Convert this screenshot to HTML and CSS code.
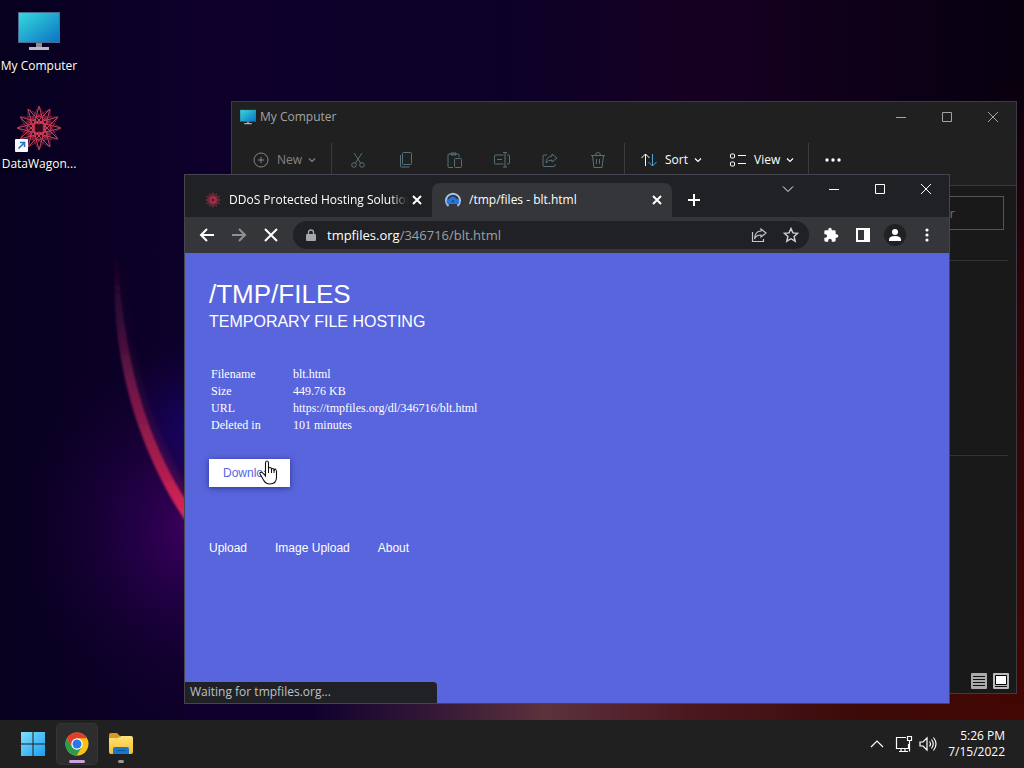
FILE: index.html
```html
<!DOCTYPE html>
<html lang="en">
<head>
<meta charset="utf-8">
<title>Desktop</title>
<link rel="stylesheet" href="styles.css">
</head>
<body>
<svg class="defs" aria-hidden="true">
  <defs>
    <linearGradient id="screen" x1="0" y1="0" x2="1" y2="1"><stop offset="0" stop-color="#35d9dc"/><stop offset="1" stop-color="#0b73c4"/></linearGradient>
    <linearGradient id="win" x1="0" y1="0" x2="1" y2="1"><stop offset="0" stop-color="#7fe0fc"/><stop offset="1" stop-color="#1c9df2"/></linearGradient>
    <linearGradient id="folder" x1="0" y1="0" x2="0" y2="1"><stop offset="0" stop-color="#ffe27a"/><stop offset="1" stop-color="#f5bd2c"/></linearGradient>
    <symbol id="monitor" viewBox="0 0 42 38"><rect x="0" y="0" width="42" height="31" fill="#4d6b8c"/><rect x="1" y="1" width="40" height="29" fill="url(#screen)"/><path d="M18 31h6v4h-6z" fill="#8b8d96"/><path d="M11 35h20v3H11z" fill="#b9bbc2"/></symbol>
    <symbol id="star" viewBox="-24 -24 48 48"><g fill="none" stroke="#a03048" stroke-width="1"><circle r="15" fill="#5a1024" stroke="none" opacity=".5"/><path stroke="#c2485f" d="M0-22 11 19-19-11 22 0-19 11 11-19 0 22-11-19 19 11-22 0 19-11-11 19Z"/><path d="M0-22 19 11-19 11ZM11-19 11 19-22 0ZM19-11 0 22-19-11ZM22 0-11 19-11-19Z" opacity=".7"/><g stroke="#d32f4d"><circle cy="-8" r="4"/><circle cy="8" r="4"/><circle cx="-8" r="4"/><circle cx="8" r="4"/><circle cx="6" cy="6" r="3"/><circle cx="-6" cy="6" r="3"/><circle cx="6" cy="-6" r="3"/><circle cx="-6" cy="-6" r="3"/></g></g></symbol>
    <symbol id="chev" viewBox="0 0 8 8"><path d="M1 2.500l3 3 3-3" fill="none" stroke="currentColor" stroke-width="1.200"/></symbol>
    <symbol id="x" viewBox="0 0 12 12"><path d="M1 1l10 10M11 1L1 11" fill="none" stroke="currentColor"/></symbol>
    <symbol id="min" viewBox="0 0 12 12"><path d="M1 6.500h10" stroke="currentColor"/></symbol>
    <symbol id="max" viewBox="0 0 12 12"><path d="M1.500 1.500h9v9h-9z" fill="none" stroke="currentColor"/></symbol>
  </defs>
</svg>
<div class="desktop">
  <svg class="wallpaper" viewBox="0 0 1024 720" preserveAspectRatio="none" aria-hidden="true">
    <defs>
      <radialGradient id="violet" gradientUnits="userSpaceOnUse" cx="200" cy="530" r="190"><stop offset="0" stop-color="#400062"/><stop offset=".4" stop-color="#26004a" stop-opacity=".75"/><stop offset="1" stop-color="#150030" stop-opacity="0"/></radialGradient>
      <radialGradient id="blue" gradientUnits="userSpaceOnUse" cx="200" cy="430" r="100"><stop offset="0" stop-color="#16067a" stop-opacity=".8"/><stop offset="1" stop-color="#10003a" stop-opacity="0"/></radialGradient>
      <linearGradient id="base" x1="0" x2="1" y1="0" y2="0"><stop offset="0" stop-color="#07001f"/><stop offset=".2" stop-color="#0e002b"/><stop offset=".5" stop-color="#0d0028"/><stop offset=".68" stop-color="#160022"/><stop offset=".85" stop-color="#0e0018"/><stop offset="1" stop-color="#07000f"/></linearGradient>
      <linearGradient id="floor" x1="0" x2="1" y1="0" y2="0"><stop offset=".15" stop-color="#10002d"/><stop offset=".3" stop-color="#351936"/><stop offset=".43" stop-color="#5c323c"/><stop offset=".6" stop-color="#4c1820"/><stop offset=".8" stop-color="#3c0a08"/><stop offset="1" stop-color="#430703"/></linearGradient>
      <linearGradient id="side" x1="0" x2="0" y1="0" y2="1"><stop offset=".1" stop-color="#2c0008" stop-opacity="0"/><stop offset=".4" stop-color="#2c0308"/><stop offset="1" stop-color="#430703"/></linearGradient>
      <linearGradient id="arc" gradientUnits="userSpaceOnUse" x1="0" x2="0" y1="250" y2="515"><stop offset="0" stop-color="#5a1440" stop-opacity="0"/><stop offset=".25" stop-color="#4a1040" stop-opacity=".6"/><stop offset=".5" stop-color="#6b1748"/><stop offset=".8" stop-color="#a81c4e"/><stop offset="1" stop-color="#da2657"/></linearGradient>
      <filter id="soft" x="-50%" y="-10%" width="200%" height="120%"><feGaussianBlur stdDeviation="1"/></filter>
      <filter id="glow" x="-50%" y="-10%" width="200%" height="120%"><feGaussianBlur stdDeviation="4"/></filter>
    </defs>
    <path fill="url(#base)" d="M0 0h1024v720H0z"/>
    <path fill="url(#violet)" d="M0 300h420v420H0z"/>
    <path fill="url(#blue)" d="M116 250C110 350 136 446 190 528h120V250z"/>
    <path fill="url(#floor)" d="M184 690h840v30H184z"/>
    <path fill="url(#side)" d="M1000 0h24v720h-24z"/>
    <path d="M122 260C119 350 146 440 195 508" fill="none" stroke="url(#arc)" stroke-width="6" opacity=".4" filter="url(#glow)"/>
    <path d="M115 250C109 350 134 446 190 528L190 506C145 440 121 350 118 250Z" fill="url(#arc)" filter="url(#soft)"/>
  </svg>

  <nav class="shortcuts" aria-label="Desktop icons">
    <a href="#computer" class="shortcut"><svg class="pc"><use href="#monitor"/></svg><span>My Computer</span></a>
    <a href="#datawagon" class="shortcut compact"><svg class="wagon" viewBox="0 0 48 48"><use href="#star" width="48" height="48"/><rect x="0" y="35" width="13" height="13" rx="1" fill="#f7f8fc"/><path d="M3.500 44.500l5.500-5.500M5 38.500h4.500v4.500" fill="none" stroke="#2672c8" stroke-width="1.600"/></svg><span>DataWagon...</span></a>
  </nav>

  <section class="explorer" aria-label="My Computer">
    <header class="ex-title"><svg class="ex-icon"><use href="#monitor"/></svg><span>My Computer</span>
      <div class="caption"><button aria-label="Minimize"><svg><use href="#min"/></svg></button><button aria-label="Maximize"><svg><use href="#max"/></svg></button><button aria-label="Close"><svg><use href="#x"/></svg></button></div>
    </header>
    <div class="commands">
      <button class="cmd new"><svg class="i16" viewBox="0 0 16 16"><circle cx="8" cy="8" r="7"/><path d="M8 5v6M5 8h6"/></svg>New<svg class="chev"><use href="#chev"/></svg></button>
      <div class="tools">
        <button aria-label="Cut"><svg class="i16" viewBox="0 0 16 16"><path d="M4 1l6.500 10M12 1L5.500 11"/><circle cx="4" cy="13" r="2.300"/><circle cx="12" cy="13" r="2.300"/></svg></button>
        <button aria-label="Copy"><svg class="i16" viewBox="0 0 16 16"><rect x="4.500" y=".5" width="9" height="12" rx="1"/><path d="M2.500 3v11q0 1 1 1h8"/></svg></button>
        <button aria-label="Paste"><svg class="i16" viewBox="0 0 16 16"><path d="M7 15.500H3q-1 0-1-1V3q0-1 1-1h9q1 0 1 1v2M5 1h5v2H5z"/><rect x="8.500" y="6.500" width="7" height="9" rx="1"/></svg></button>
        <button aria-label="Rename"><svg class="i16" viewBox="0 0 16 16"><path d="M9.500 3h-8q-1 0-1 1v7q0 1 1 1h8M3 7.500h5M13 3h1.500q1 0 1 1v7q0 1-1 1H13M9 .5h4M9 15h4M11 .5V15"/></svg></button>
        <button aria-label="Share"><svg class="i16" viewBox="0 0 16 16"><path d="M5 3H2q-1 0-1 1v9.500q0 1 1 1h10q1 0 1-1V12M10 2l5 4-5 4V8Q6 8 4 11q0-6 6-7z"/></svg></button>
        <button aria-label="Delete"><svg class="i16" viewBox="0 0 16 16"><path d="M1 3.500h14M5.500 3.500q0-3 2.500-3t2.500 3M2.500 3.500l1.500 12h8l1.500-12M6.500 7v5M9.500 7v5"/></svg></button>
      </div>
      <div class="views">
        <button class="cmd"><svg class="i16 sort" viewBox="0 0 16 16"><path d="M4.500 14V2M.5 6l4-4 4 4"/><path class="down" d="M11.500 2v12M7.500 10l4 4 4-4"/></svg>Sort<svg class="chev"><use href="#chev"/></svg></button>
        <button class="cmd"><svg class="i16" viewBox="0 0 16 16"><rect x=".5" y="2" width="4" height="4" rx="1"/><rect x=".5" y="10" width="4" height="4" rx="1"/><path d="M8 3.500h8M8 11.500h8"/></svg>View<svg class="chev"><use href="#chev"/></svg></button>
      </div>
      <button class="more" aria-label="See more"><svg class="dots" viewBox="0 0 18 6"><circle cx="3" cy="3" r="1.700"/><circle cx="9" cy="3" r="1.700"/><circle cx="15" cy="3" r="1.700"/></svg></button>
    </div>
    <div class="ex-address"><input class="search" type="text" aria-label="Search" placeholder="Search My Computer"></div>
    <div class="ex-body"><div class="group"></div><div class="group"></div></div>
    <footer class="ex-status">
      <button aria-label="Details view"><svg viewBox="0 0 16 16"><rect width="16" height="16" rx="1" fill="#aaa"/><path d="M2 3.500h12M2 6.500h12M2 9.500h12M2 12.500h12" stroke="#111"/></svg></button>
      <button aria-label="Large icons view"><svg viewBox="0 0 16 16"><rect width="16" height="16" rx="1" fill="#bbb"/><path d="M2.500 2.500h11v9h-11z" fill="#fff" stroke="#000"/><path d="M2 13.500h12" stroke="#111"/></svg></button>
    </footer>
  </section>

  <section class="chrome" aria-label="Browser">
    <div class="tabs">
      <div class="tab"><svg class="i16c"><use href="#star"/></svg><span class="tab-text fade">DDoS Protected Hosting Solution</span><button aria-label="Close tab"><svg class="tab-x" viewBox="0 0 10 10"><path d="M1 1l8 8M9 1L1 9"/></svg></button></div>
      <div class="tab active"><svg class="i16c" viewBox="0 0 16 16"><path d="M3.500 14A7 7 0 1 1 12.500 14" fill="none" stroke="#a9c2f2" stroke-width="2"/><path d="M4 12a2.500 2.500 0 0 1 0-5 4 4 0 0 1 7.500 0A2.500 2.500 0 0 1 12 12z" fill="#2378dc"/><path d="M8 11V8M6.500 9.500L8 8l1.500 1.500" fill="none" stroke="#174c9a"/></svg><span class="tab-text">/tmp/files - blt.html</span><button aria-label="Close tab"><svg class="tab-x" viewBox="0 0 10 10"><path d="M1 1l8 8M9 1L1 9"/></svg></button></div>
      <button class="plus" aria-label="New tab"><svg viewBox="0 0 12 12"><path d="M6 0v12M0 6h12" stroke="#fff" stroke-width="2"/></svg></button>
      <div class="caption"><button aria-label="Search tabs"><svg viewBox="0 0 12 12"><path d="M1 3.500l5 5 5-5" fill="none" stroke="currentColor"/></svg></button><button aria-label="Minimize"><svg><use href="#min"/></svg></button><button aria-label="Maximize"><svg><use href="#max"/></svg></button><button aria-label="Close"><svg><use href="#x"/></svg></button></div>
    </div>
    <div class="toolbar">
      <div class="nav">
        <button aria-label="Back"><svg viewBox="0 0 16 16"><path d="M15 8H2M8 2L2 8l6 6"/></svg></button>
        <button aria-label="Forward" class="dim"><svg viewBox="0 0 16 16"><path d="M1 8h13M8 2l6 6-6 6"/></svg></button>
        <button aria-label="Stop"><svg viewBox="0 0 16 16"><path d="M2 2l12 12M14 2L2 14"/></svg></button>
      </div>
      <div class="omnibox">
        <svg class="lock" viewBox="0 0 10 12"><path d="M1 5h8q1 0 1 1v5q0 1-1 1H1q-1 0-1-1V6q0-1 1-1z" fill="#a5a7aa"/><path d="M2.500 5V3.500a2.500 2.500 0 0 1 5 0V5" fill="none" stroke="#a5a7aa" stroke-width="1.300"/></svg>
        <span class="url"><b>tmpfiles.org</b>/346716/blt.html</span>
        <button aria-label="Share"><svg viewBox="0 0 16 16"><path d="M1.500 5v9.500h11V12M10 2l5 4-5 4V8Q5 8 3.500 12 4 4 10 4z" fill="none" stroke="#c4c6c9" stroke-width="1.200"/></svg></button>
        <button aria-label="Bookmark"><svg viewBox="0 0 16 16"><path d="M8 1.500l1.900 4.400 4.800.4-3.600 3.200 1.100 4.700L8 11.700l-4.200 2.500 1.100-4.700-3.600-3.200 4.800-.4z" fill="none" stroke="#d0d2d5" stroke-width="1.400"/></svg></button>
      </div>
      <div class="actions">
        <button aria-label="Extensions"><svg viewBox="0 0 24 24"><path fill="#fff" d="M20.500 11H19V7a2 2 0 0 0-2-2h-4V3.500a2.500 2.500 0 0 0-5 0V5H4a2 2 0 0 0-2 2v3.800h1.500a2.700 2.700 0 0 1 0 5.400H2V20a2 2 0 0 0 2 2h3.800v-1.500a2.700 2.700 0 0 1 5.400 0V22H17a2 2 0 0 0 2-2v-4h1.500a2.500 2.500 0 0 0 0-5z"/></svg></button>
        <button aria-label="Side panel"><svg viewBox="0 0 16 16"><path fill="#fff" fill-rule="evenodd" d="M1 1h14v14H1zM3 3v10h6V3z"/></svg></button>
        <button aria-label="Profile" class="profile"><svg viewBox="0 0 16 16"><circle cx="8" cy="5" r="3" fill="#fff"/><path d="M2 14v-1.500q0-3.500 6-3.500t6 3.500V14z" fill="#fff"/></svg></button>
        <button aria-label="Menu"><svg viewBox="0 0 16 16" fill="#fff"><circle cx="8" cy="3" r="1.600"/><circle cx="8" cy="8" r="1.600"/><circle cx="8" cy="13" r="1.600"/></svg></button>
      </div>
    </div>
    <main class="page">
      <h1>/TMP/FILES</h1>
      <h2>TEMPORARY FILE HOSTING</h2>
      <table>
        <tr><td>Filename</td><td>blt.html</td></tr>
        <tr><td>Size</td><td>449.76 KB</td></tr>
        <tr><td>URL</td><td>https://tmpfiles.org/dl/346716/blt.html</td></tr>
        <tr><td>Deleted in</td><td>101 minutes</td></tr>
      </table>
      <div class="download-wrap"><button class="download">Download</button>
        <svg class="cursor" viewBox="0 0 19 25"><path d="M6.500 14.500V3q0-2 1.500-2t1.500 2v6q0-1.500 1.500-1.500T12.500 9v1q0-1.500 1.300-1.500T15 10v1q0-1.500 1.200-1.500t1.300 2v6q0 6-6.500 6.500-4.500 0-6.500-4L1 14q-.5-2 1.500-1.800Q4 12.500 6.500 16z" fill="#fff" stroke="#111" stroke-width="1.100"/><path d="M9.500 8v5M12.500 9v4M15 10v3" stroke="#111"/></svg>
      </div>
      <nav class="links"><a href="#upload">Upload</a><a href="#image">Image Upload</a><a href="#about">About</a></nav>
    </main>
    <div class="status">Waiting for tmpfiles.org...</div>
  </section>
</div>
<footer class="taskbar">
  <div class="apps">
    <button aria-label="Start"><svg viewBox="0 0 24 24"><path d="M0 0h11.500v11.500H0zM12.500 0H24v11.500H12.500zM0 12.500h11.500V24H0zM12.500 12.500H24V24H12.500z" fill="url(#win)"/></svg></button>
    <button aria-label="Chrome" class="current"><svg viewBox="0 0 24 24"><circle cx="12" cy="12" r="11.500" fill="#fbc117"/><path d="M2 6.200A11.500 11.500 0 0 1 22 6.300H12L7 15z" fill="#e33b2e"/><path d="M2 6.200l5 8.700 5 2.600 4.500-2-5 8A11.500 11.500 0 0 1 2 6.200z" fill="#299d4b"/><circle cx="12" cy="12" r="5.700" fill="#fff"/><circle cx="12" cy="12" r="4.500" fill="#2878e8"/></svg></button>
    <button aria-label="File Explorer" class="open"><svg viewBox="0 0 24 24"><path d="M0 3q0-2 2-2h6l3 3v5H0z" fill="#d99a19"/><path d="M0 6h9l3-2h10q2 0 2 2v14q0 2-2 2H2q-2 0-2-2z" fill="url(#folder)"/><path d="M4 22v-5q0-2 2-2h12q2 0 2 2v5z" fill="#1976c9"/><path d="M8 18h8v1H8z" fill="#0b559f"/></svg></button>
  </div>
  <div class="tray">
    <button aria-label="Hidden icons"><svg viewBox="0 0 16 16"><path d="M2 11l6-6 6 6"/></svg></button>
    <button aria-label="Network"><svg viewBox="0 0 18 18"><path d="M11 2.500H1.500v11h12V9M4 16.500h9M6 13.500v3M10 13.500v3M12.500 1.500h4v4h-4zM14.500 5.500v11"/></svg></button>
    <button aria-label="Volume"><svg viewBox="0 0 18 18"><path d="M1 7v4h3l4 4V3L4 7zM10.500 6.500q2 2.500 0 5M12.500 4.500q3.500 4.500 0 9M14.500 2.500q5 6.500 0 13"/></svg></button>
    <div class="clock"><time>5:26 PM</time><time>7/15/2022</time></div>
  </div>
</footer>
</body>
</html>
```
FILE: styles.css
```css
* { box-sizing: border-box; }
body { margin: 0; height: 100vh; display: flex; flex-direction: column; overflow: hidden; background: #0c0026; color: #fff; font: 12px/16px "Open Sans", "Noto Sans", sans-serif; }
button { display: flex; align-items: center; justify-content: center; margin: 0; padding: 0; border: 0; background: none; color: inherit; font: inherit; }
svg { display: block; flex: none; }
.defs { position: absolute; width: 0; height: 0; }

.desktop { position: relative; flex: 1; min-height: 0; overflow: hidden; }
.wallpaper { position: absolute; inset: 0; width: 100%; height: 100%; }
.shortcuts { position: relative; display: flex; flex-direction: column; gap: 30px; width: 78px; padding-top: 12px; }
.shortcut { display: flex; flex-direction: column; align-items: center; gap: 8px; color: #fff; text-decoration: none; text-shadow: 0 1px 2px #000; white-space: nowrap; }
.compact { gap: 4px; }
.pc { width: 42px; height: 38px; }
.wagon { width: 48px; height: 48px; }

.caption { display: flex; margin-left: auto; }
.caption button { width: 46px; height: 28px; }
.caption svg { width: 12px; height: 12px; }

.explorer { position: absolute; inset: 101px 7px 26px 231px; display: flex; flex-direction: column; border: 1px solid #3d3a41; background: #191919; }
.ex-title { display: flex; align-items: center; gap: 4px; height: 30px; padding-left: 8px; background: #202020; color: #a3a3a3; }
.ex-icon { width: 16px; height: 16px; }
.commands { display: flex; align-items: center; height: 54px; padding-top: 2px; border-bottom: 1px solid #383838; background: #202020; }
.cmd { gap: 8px; }
.new { width: 100px; height: 34px; padding-left: 6px; border-right: 1px solid #3b3b3b; color: #858585; }
.i16 { width: 16px; height: 16px; fill: none; stroke: currentColor; }
.chev { width: 8px; height: 8px; margin-left: -2px; }
.tools { display: flex; gap: 32px; height: 34px; padding: 0 18px; border-right: 1px solid #3b3b3b; color: #567079; }
.views { display: flex; gap: 28px; height: 34px; padding: 0 14px 0 16px; border-right: 1px solid #3b3b3b; }
.down { stroke: #4fa4d6; }
.more { width: 48px; }
.dots { width: 18px; height: 6px; fill: #fff; }
.ex-address { display: flex; justify-content: flex-end; padding: 10px 12px 10px 8px; }
.search { width: 176px; height: 34px; padding: 0 8px; border: 1px solid #555; background: #191919; color: #777; font: inherit; }
.search::placeholder { color: #777; opacity: 1; }
.ex-body { flex: 1; padding: 20px 8px 0; }
.group { height: 195px; border-top: 1px solid #333; }
.ex-status { display: flex; justify-content: flex-end; gap: 6px; padding: 0 7px 4px; }
.ex-status svg { width: 16px; height: 16px; }

.chrome { position: absolute; inset: 174px 74px 16px 184px; display: flex; flex-direction: column; border: 1px solid #45454f; background: #202124; }
.tabs { display: flex; align-items: flex-end; height: 42px; padding-left: 7px; }
.tab { display: flex; align-items: center; gap: 8px; width: 240px; height: 34px; padding: 0 8px 0 13px; }
.tab.active { border-radius: 8px 8px 0 0; background: #35363a; }
.tab button { width: 14px; height: 14px; margin-left: -6px; }
.tab-x { width: 10px; height: 10px; stroke: #fff; stroke-width: 2; }
.tab-text { flex: 1; min-width: 0; overflow: hidden; white-space: nowrap; }
.fade { -webkit-mask-image: linear-gradient(to right, #000 90%, transparent); mask-image: linear-gradient(to right, #000 90%, transparent); }
.i16c { width: 16px; height: 16px; }
.plus { width: 28px; height: 34px; margin-left: 8px; }
.plus svg { width: 12px; height: 12px; }
.tabs .caption { align-self: flex-start; }
.toolbar { display: flex; align-items: center; height: 36px; background: #35363a; }
.nav { display: flex; gap: 16px; padding: 0 14px; }
.nav svg { width: 16px; height: 16px; fill: none; stroke: #fff; stroke-width: 2; }
.nav .dim { opacity: .45; }
.omnibox { display: flex; flex: 1; align-items: center; gap: 16px; height: 28px; padding: 0 10px 0 13px; border-radius: 14px; background: #202124; font-size: 13px; }
.lock { width: 10px; height: 12px; margin-right: -5px; }
.omnibox button svg { width: 16px; height: 16px; }
.url { flex: 1; color: #9aa0a6; }
.url b { color: #fff; font-weight: 400; }
.actions { display: flex; align-items: center; gap: 10px; padding: 0 11px; }
.actions button { width: 22px; height: 22px; border-radius: 50%; }
.actions svg { width: 16px; height: 16px; }
.actions .profile { background: #202124; }
.page { flex: 1; min-height: 0; padding: 25px 24px; overflow: hidden; background: #5865dc; }
h1, h2 { margin: 0; font-family: "Liberation Sans", Arial, sans-serif; font-weight: 400; }
h1 { font-size: 26px; line-height: 32px; }
h2 { font-size: 16px; line-height: 24px; }
table { margin-top: 32px; border-spacing: 2px 0; font: 12px/17px "Liberation Serif", "Times New Roman", serif; }
td { padding: 0; }
td:first-child { width: 80px; }
.download-wrap { position: relative; width: max-content; margin: 25px 0 53px; }
.download { padding: 6px 14px; background: #fff; color: #5865dc; box-shadow: 0 1px 6px rgba(20, 20, 100, .6); font: 12px/16px "Liberation Sans", Arial, sans-serif; }
.cursor { position: absolute; left: 50px; top: 1px; width: 19px; height: 25px; }
.links { display: flex; gap: 28px; font: 12px/16px "Liberation Sans", Arial, sans-serif; }
.links a { color: #fff; text-decoration: none; }
.status { position: absolute; left: 0; bottom: 0; width: 252px; padding: 2px 5px 3px; border-top-right-radius: 4px; background: #202124; color: #bdc1c6; }

.taskbar { display: flex; align-items: center; justify-content: space-between; height: 48px; padding: 0 19px 0 13px; background: #202020; }
.apps { display: flex; gap: 4px; }
.apps button { position: relative; width: 40px; height: 40px; border-radius: 4px; }
.apps svg { width: 24px; height: 24px; }
.apps .current { background: #2d2d2d; box-shadow: 0 0 0 1px #353535; }
.apps .current::after, .apps .open::after { content: ""; position: absolute; bottom: 1px; width: 16px; height: 3px; border-radius: 2px; background: #cba2e4; }
.apps .open::after { width: 6px; background: #999; }
.tray { display: flex; align-items: center; gap: 6px; }
.tray svg { width: 18px; height: 18px; fill: none; stroke: #fff; stroke-width: 1.200; }
.tray button:first-child svg { width: 16px; }
.tray button:first-child { margin-right: 4px; }
.clock { display: flex; flex-direction: column; margin-left: 5px; text-align: right; }
```
